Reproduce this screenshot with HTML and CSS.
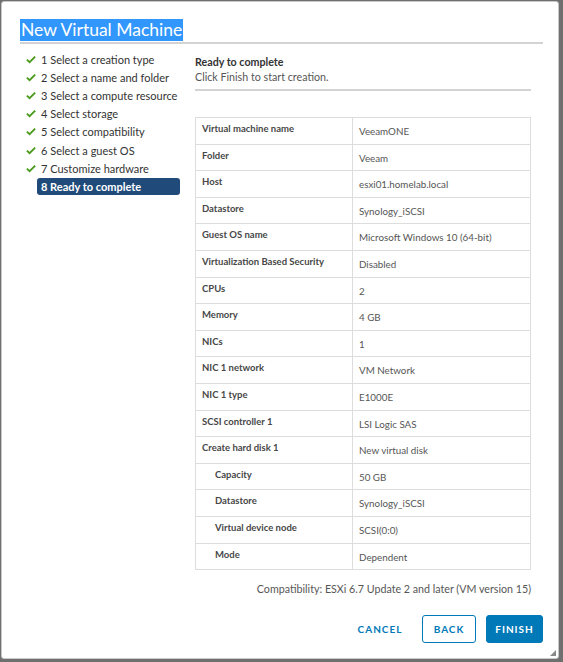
FILE: index.html
```html
<!DOCTYPE html>
<html>
<head>
<meta charset="utf-8">
<link rel="stylesheet" href="styles.css">
</head>
<body>
<div class="dialog">
  <div class="header">
    <h1 class="title"><span class="sel">New Virtual Machine</span></h1>
  </div>
  <div class="main">
    <ul class="steps">
      <li class="step done"><svg class="check" viewBox="0 0 12 10" width="10" height="9"><path d="M1 5.2 L4.3 8.3 L11 1.5" fill="none" stroke="#4a9a1c" stroke-width="2.2"/></svg><span>1 Select a creation type</span></li>
      <li class="step done"><svg class="check" viewBox="0 0 12 10" width="10" height="9"><path d="M1 5.2 L4.3 8.3 L11 1.5" fill="none" stroke="#4a9a1c" stroke-width="2.2"/></svg><span>2 Select a name and folder</span></li>
      <li class="step done"><svg class="check" viewBox="0 0 12 10" width="10" height="9"><path d="M1 5.2 L4.3 8.3 L11 1.5" fill="none" stroke="#4a9a1c" stroke-width="2.2"/></svg><span>3 Select a compute resource</span></li>
      <li class="step done"><svg class="check" viewBox="0 0 12 10" width="10" height="9"><path d="M1 5.2 L4.3 8.3 L11 1.5" fill="none" stroke="#4a9a1c" stroke-width="2.2"/></svg><span>4 Select storage</span></li>
      <li class="step done"><svg class="check" viewBox="0 0 12 10" width="10" height="9"><path d="M1 5.2 L4.3 8.3 L11 1.5" fill="none" stroke="#4a9a1c" stroke-width="2.2"/></svg><span>5 Select compatibility</span></li>
      <li class="step done"><svg class="check" viewBox="0 0 12 10" width="10" height="9"><path d="M1 5.2 L4.3 8.3 L11 1.5" fill="none" stroke="#4a9a1c" stroke-width="2.2"/></svg><span>6 Select a guest OS</span></li>
      <li class="step done"><svg class="check" viewBox="0 0 12 10" width="10" height="9"><path d="M1 5.2 L4.3 8.3 L11 1.5" fill="none" stroke="#4a9a1c" stroke-width="2.2"/></svg><span>7 Customize hardware</span></li>
      <li class="step active"><span>8 Ready to complete</span></li>
    </ul>
    <div class="content">
      <div class="intro">
        <div class="intro-title">Ready to complete</div>
        <div class="intro-sub">Click Finish to start creation.</div>
      </div>
      <table class="summary">
        <colgroup><col class="ck"><col class="cv"></colgroup>
        <tr><td class="k">Virtual machine name</td><td class="v">VeeamONE</td></tr>
        <tr><td class="k">Folder</td><td class="v">Veeam</td></tr>
        <tr><td class="k">Host</td><td class="v">esxi01.homelab.local</td></tr>
        <tr><td class="k">Datastore</td><td class="v">Synology_iSCSI</td></tr>
        <tr><td class="k">Guest OS name</td><td class="v">Microsoft Windows 10 (64-bit)</td></tr>
        <tr><td class="k">Virtualization Based Security</td><td class="v">Disabled</td></tr>
        <tr><td class="k">CPUs</td><td class="v">2</td></tr>
        <tr><td class="k">Memory</td><td class="v">4 GB</td></tr>
        <tr><td class="k">NICs</td><td class="v">1</td></tr>
        <tr><td class="k">NIC 1 network</td><td class="v">VM Network</td></tr>
        <tr><td class="k">NIC 1 type</td><td class="v">E1000E</td></tr>
        <tr><td class="k">SCSI controller 1</td><td class="v">LSI Logic SAS</td></tr>
        <tr><td class="k">Create hard disk 1</td><td class="v">New virtual disk</td></tr>
        <tr><td class="k sub">Capacity</td><td class="v">50 GB</td></tr>
        <tr><td class="k sub">Datastore</td><td class="v">Synology_iSCSI</td></tr>
        <tr><td class="k sub">Virtual device node</td><td class="v">SCSI(0:0)</td></tr>
        <tr><td class="k sub">Mode</td><td class="v">Dependent</td></tr>
      </table>
      <div class="compat">Compatibility: ESXi 6.7 Update 2 and later (VM version 15)</div>
    </div>
  </div>
  <div class="footer">
    <button class="btn link">CANCEL</button>
    <button class="btn outline">BACK</button>
    <button class="btn primary">FINISH</button>
  </div>
  <div class="grip"></div>
</div>
</body>
</html>
```

FILE: styles.css
```css
html, body {
  margin: 0;
  padding: 0;
}
body {
  background: #6f6f6f;
  width: 563px;
  height: 662px;
  overflow: hidden;
  font-family: Lato, "Open Sans", sans-serif;
  color: #333;
}
.dialog {
  position: relative;
  box-sizing: border-box;
  margin: 1px 4px 0 1px;
  width: 558px;
  height: 658px;
  background: #fff;
  border: 1px solid #c9c9c9;
  border-radius: 3px;
}
.header {
  margin: 0 15px 0 18px;
  padding-top: 18px;
  border-bottom: 2px solid #d3d3d3;
  height: 22px;
}
.title {
  margin: 0;
  font-size: 17.5px;
  font-weight: 400;
  line-height: 20px;
}
.sel {
  background: #3297fd;
  color: #fff;
  padding: 0 1px 1px 1px;
}
.main {
  display: flex;
  padding-top: 6px;
}
.steps {
  list-style: none;
  margin: 0;
  padding: 0 0 0 24px;
  width: 156px;
}
.step {
  display: flex;
  align-items: center;
  height: 18.2px;
  font-size: 11px;
  color: #333;
  white-space: nowrap;
}
.check {
  margin-right: 5px;
  flex: none;
}
.step.active span {
  display: block;
  margin-left: 11px;
  background: #1f4a7a;
  color: #fff;
  font-weight: 700;
  width: 139px;
  padding: 2px 0 1px 4px;
  border-radius: 3px;
  line-height: 14px;
}
.content {
  margin-left: 13px;
  width: 336px;
}
.intro {
  padding-top: 4px;
  height: 30px;
  padding-bottom: 5px;
  border-bottom: 2px solid #d3d3d3;
}
.intro-title {
  font-size: 10.7px;
  font-weight: 700;
  color: #333;
  line-height: 15px;
}
.intro-sub {
  font-size: 10.7px;
  color: #565656;
  line-height: 15px;
}
.summary {
  margin-top: 26px;
  width: 336px;
  table-layout: fixed;
  border-collapse: collapse;
  border: 1px solid #ccc;
}
.ck {
  width: 157px;
}
.summary tr {
  height: 26.6px;
}
.summary td {
  border: 1px solid #ddd;
  padding: 0 6px;
  vertical-align: top;
}
.k {
  font-size: 9.5px;
  font-weight: 700;
  color: #474747;
  padding-top: 5px !important;
}
.k.sub {
  padding-left: 19px !important;
}
.v {
  font-size: 9.8px;
  color: #565656;
  padding-top: 7px !important;
}
.compat {
  text-align: right;
  font-size: 10.7px;
  color: #565656;
  margin-top: 12px;
}
.footer {
  display: flex;
  justify-content: flex-end;
  gap: 10px;
  margin: 20px 15px 0 0;
}
.btn {
  font-family: Lato, "Open Sans", sans-serif;
  font-size: 10px;
  font-weight: 700;
  letter-spacing: 1px;
  height: 28px;
  border-radius: 3px;
  padding: 0;
  cursor: pointer;
}
.link {
  background: none;
  border: 1px solid transparent;
  color: #0079b8;
  width: 62px;
  margin-right: 1px;
}
.outline {
  background: #fff;
  border: 1px solid #0079b8;
  color: #0079b8;
  width: 54px;
}
.primary {
  background: #0079b8;
  border: 1px solid #0079b8;
  color: #fff;
  width: 57px;
}
.grip {
  position: absolute;
  right: 2px;
  bottom: 2px;
  width: 0;
  height: 0;
  border-left: 6px solid transparent;
  border-bottom: 6px solid #888;
}
```
